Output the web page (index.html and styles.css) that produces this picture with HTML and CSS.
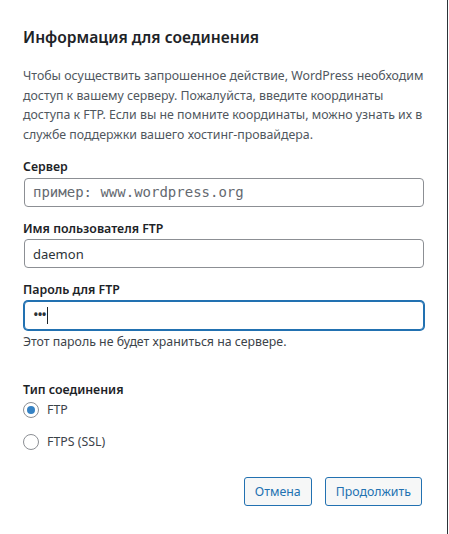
FILE: index.html
```html
<!DOCTYPE html>
<html lang="ru">
<head>
<meta charset="utf-8">
<title>Информация для соединения</title>
<link rel="stylesheet" href="styles.css">
</head>
<body>
<div class="dialog">
  <h1 class="title">Информация для соединения</h1>
  <p class="intro">Чтобы осуществить запрошенное действие, WordPress необходим доступ к вашему серверу. Пожалуйста, введите координаты доступа к FTP. Если вы не помните координаты, можно узнать их в службе поддержки вашего хостинг-провайдера.</p>

  <div class="group first">
    <label class="label" for="host">Сервер</label>
    <input class="field mono" id="host" type="text" placeholder="пример: www.wordpress.org">
  </div>

  <div class="group">
    <label class="label" for="user">Имя пользователя FTP</label>
    <input class="field" id="user" type="text" value="daemon">
  </div>

  <div class="group">
    <label class="label">Пароль для FTP</label>
    <div class="field fake focused"><span class="dots">•••</span><span class="caret"></span></div>
    <p class="help">Этот пароль не будет храниться на сервере.</p>
  </div>

  <div class="group conn">
    <div class="label">Тип соединения</div>
    <div class="radio-row"><span class="radio checked"></span><span class="radio-text">FTP</span></div>
    <div class="radio-row"><span class="radio"></span><span class="radio-text">FTPS (SSL)</span></div>
  </div>

  <div class="actions">
    <button class="btn" type="button">Отмена</button>
    <button class="btn" type="button">Продолжить</button>
  </div>
</div>
</body>
</html>
```

FILE: styles.css
```css
html, body {
  margin: 0;
  padding: 0;
  background: #fff;
}
body {
  font-family: "Noto Sans", "Open Sans", sans-serif;
  font-size: 12.35px;
  line-height: 19.5px;
  color: #3c434a;
}
.dialog {
  box-sizing: border-box;
  width: 448px;
  min-height: 534px;
  padding: 25px 24px 0 24px;
  border-right: 1px solid #2c3338;
}
.title {
  margin: 0 0 0 -1px;
  font-size: 15.6px;
  line-height: 24px;
  font-weight: 600;
  color: #1d2327;
}
.intro {
  margin: 17px -6px 0 -1px;
  color: #50575e;
}
.group {
  display: flex;
  flex-direction: column;
  margin-top: 12px;
}
.group.first {
  margin-top: 13px;
}
.label {
  display: block;
  font-weight: 600;
  color: #1d2327;
  margin-left: -1px;
  margin-bottom: 1px;
}
.field {
  box-sizing: border-box;
  width: 400px;
  height: 29px;
  margin: 0;
  padding: 0 8px;
  border: 1px solid #8c8f94;
  border-radius: 4px;
  background: #fff;
  font-family: "Noto Sans", "Open Sans", sans-serif;
  font-size: 13px;
  color: #2c3338;
  outline: none;
}
.field.mono {
  font-family: "DejaVu Sans Mono", monospace;
  font-size: 14px;
}
.field.mono::placeholder {
  color: #646970;
}
.fake {
  display: flex;
  align-items: center;
}
.focused {
  border-color: #2271b1;
  box-shadow: 0 0 0 1px #2271b1;
}
.dots {
  font-size: 15px;
  letter-spacing: -1.5px;
  color: #2c3338;
}
.caret {
  display: inline-block;
  width: 1px;
  height: 17px;
  background: #1d2327;
  margin-left: 2px;
}
.help {
  margin: 2px 0 0 -1px;
  color: #3c434a;
}
.group.conn {
  margin-top: 29px;
}
.radio-row {
  display: flex;
  align-items: center;
  gap: 8px;
  height: 20px;
  margin-left: -1px;
  margin-top: -1px;
}
.radio-row + .radio-row {
  margin-top: 12px;
}
.radio {
  box-sizing: border-box;
  width: 16px;
  height: 16px;
  border: 1px solid #8c8f94;
  border-radius: 50%;
  background: #fff;
  display: flex;
  align-items: center;
  justify-content: center;
}
.radio.checked::before {
  content: "";
  width: 8px;
  height: 8px;
  border-radius: 50%;
  background: #3582c4;
}
.radio-text {
  color: #3c434a;
}
.actions {
  display: flex;
  justify-content: flex-end;
  gap: 13px;
  margin-top: 25px;
  margin-right: 1px;
}
.btn {
  box-sizing: border-box;
  height: 29px;
  padding: 0 10px;
  border: 1px solid #2271b1;
  border-radius: 3px;
  background: #f6f7f7;
  color: #2271b1;
  font-family: "Noto Sans", "Open Sans", sans-serif;
  font-size: 12.35px;
  line-height: 27px;
  cursor: pointer;
}
```
